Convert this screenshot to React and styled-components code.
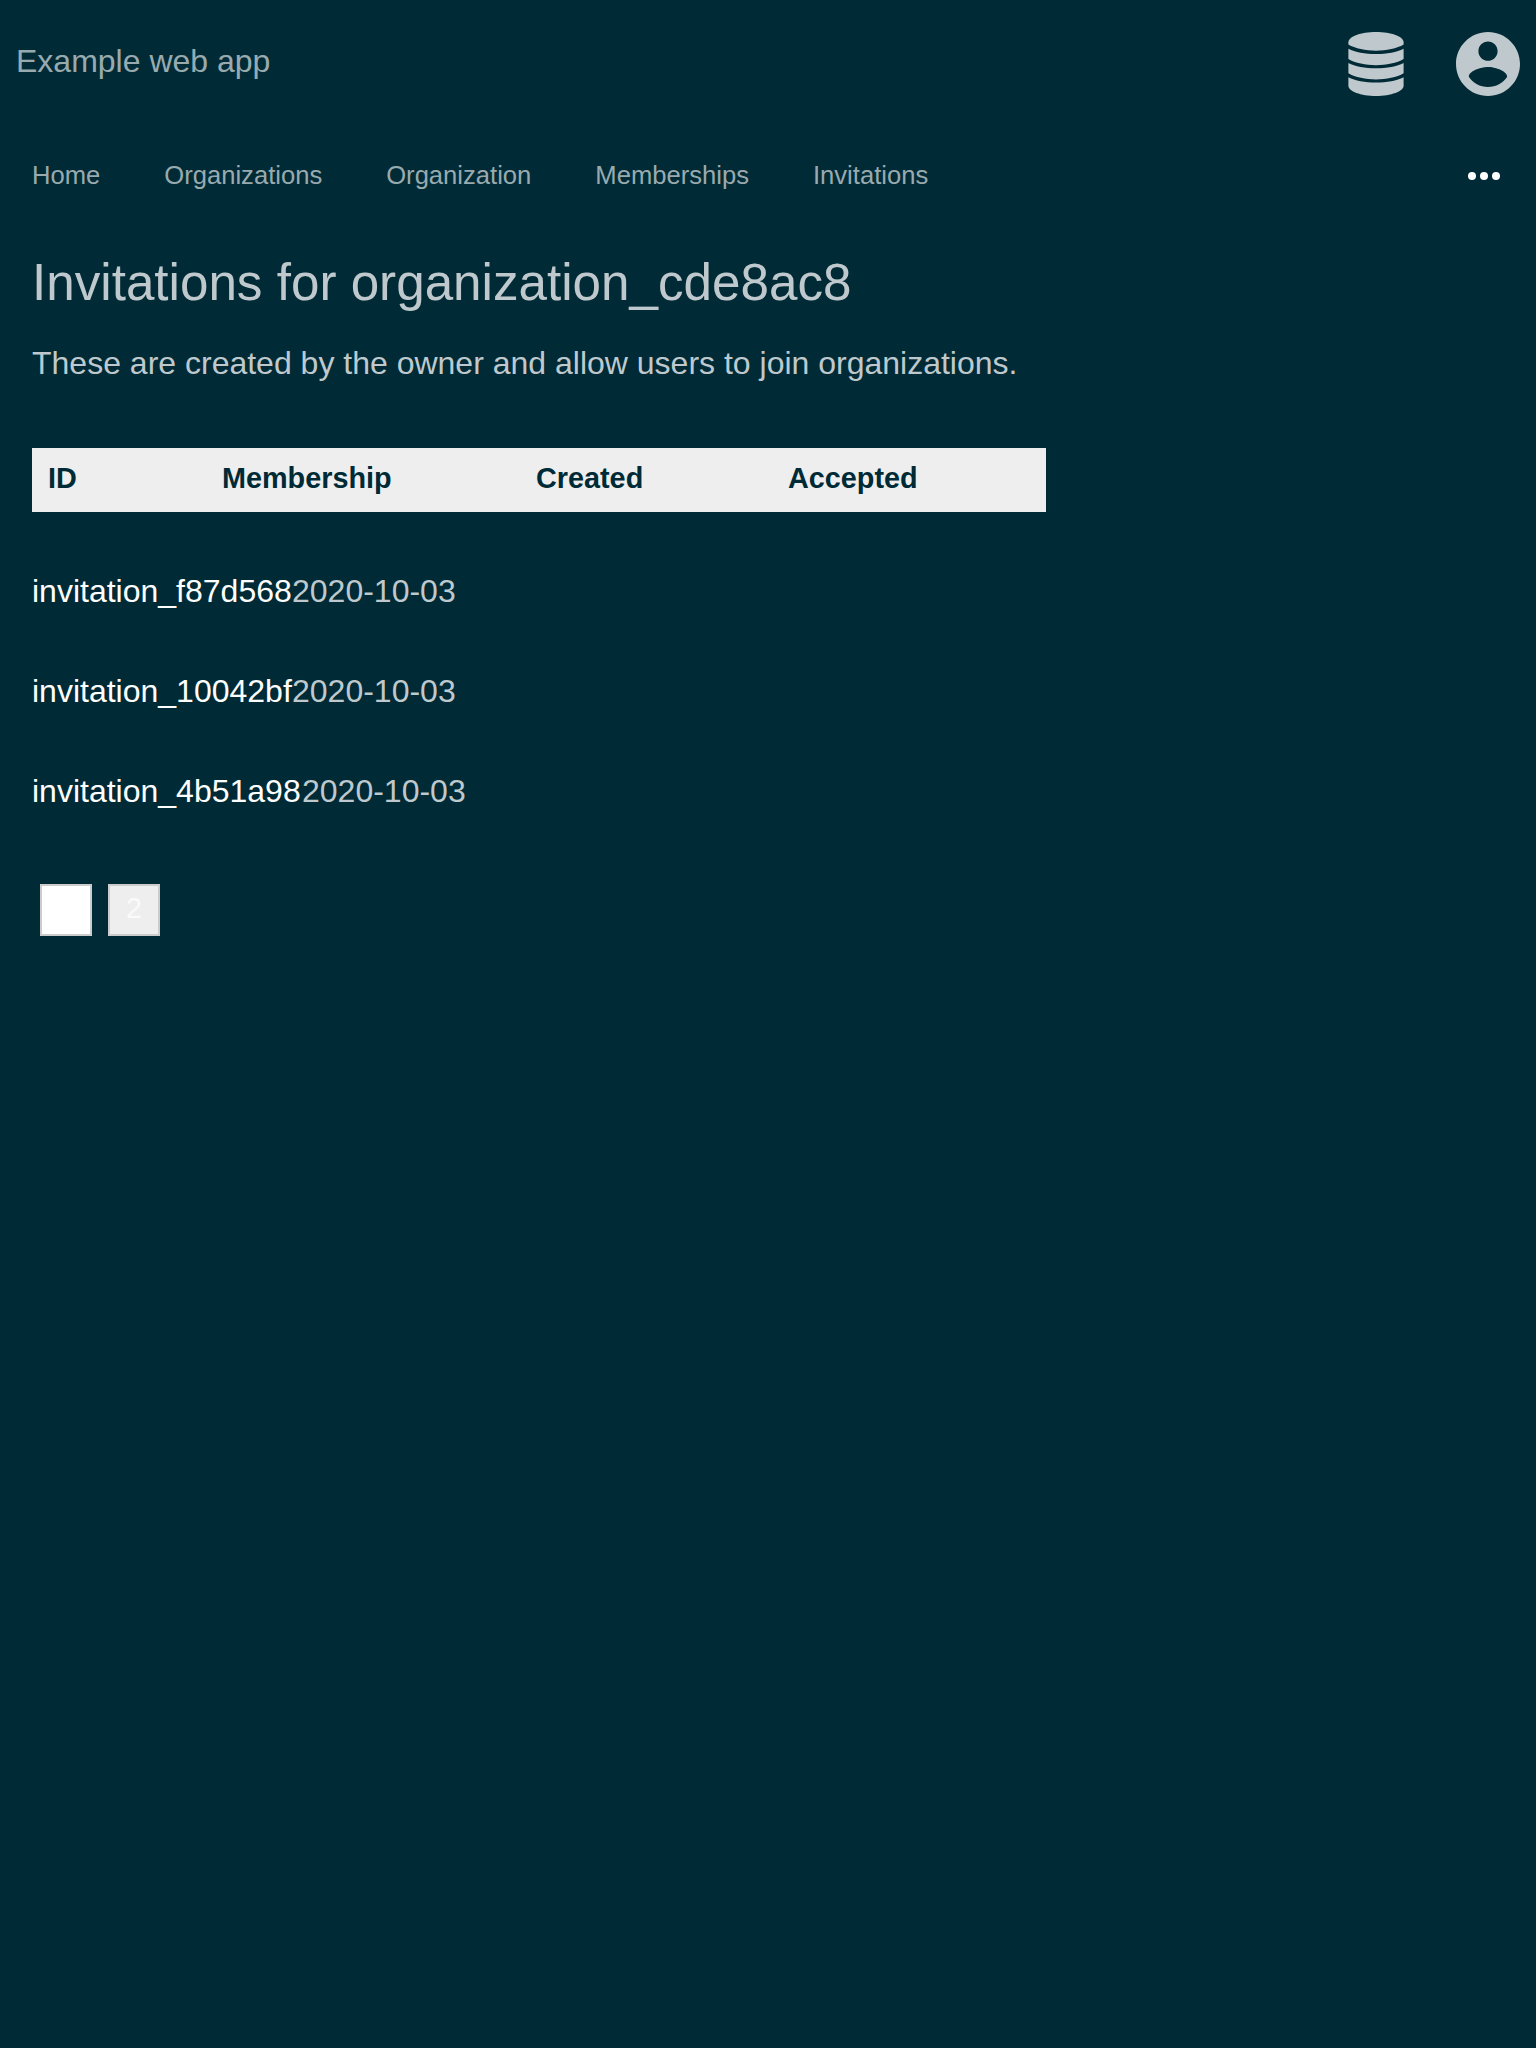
import React from "react";
import styled, { createGlobalStyle } from "styled-components";

const GlobalStyle = createGlobalStyle`
  * { box-sizing: border-box; }
  body {
    margin: 0;
    background: #002b36;
    color: #bfc9cd;
    font-family: "Liberation Sans", Arial, sans-serif;
    font-size: 32px;
    line-height: 1.5;
  }
`;

const Page = styled.div`
  min-height: 2048px;
  background: #002b36;
`;

const Header = styled.header`
  display: flex;
  justify-content: space-between;
  align-items: flex-start;
  height: 128px;
  padding: 32px 16px 0;
`;

const Brand = styled.a`
  color: #99aaaf;
  line-height: 58px;
`;

const HeaderIcons = styled.div`
  display: flex;
  gap: 48px;
`;

const HeaderIcon = styled.svg`
  display: block;
  width: 64px;
  height: 64px;
  fill: #bfc9cd;
`;

const Nav = styled.nav`
  display: flex;
  align-items: center;
  gap: 64px;
  height: 96px;
  padding: 0 32px;
`;

const NavLink = styled.a`
  padding-bottom: 2px;
  color: #99aaaf;
  font-size: 25.6px;
`;

const More = styled.svg`
  display: block;
  width: 40px;
  height: 40px;
  margin-left: auto;
  fill: #fff;
`;

const Main = styled.main`
  padding: 20px 32px;
`;

const Title = styled.h1`
  margin: 0;
  font-size: 51.2px;
  font-weight: 400;
  line-height: 77px;
`;

const Intro = styled.p`
  margin: 18px 0 0;
  line-height: 48px;
`;

const TableHead = styled.div`
  display: flex;
  width: 1014px;
  height: 64px;
  margin-top: 61px;
  padding: 0 16px;
  background: #eee;
`;

const HeadCell = styled.div`
  width: ${(p) => p.$width}px;
  color: #002b36;
  font-size: 28.8px;
  font-weight: 700;
  line-height: 61px;
`;

const List = styled.ul`
  display: grid;
  gap: 52px;
  margin: 55px 0 0;
  padding: 0;
  list-style: none;
`;

const Invitation = styled.li`
  display: flex;
  line-height: 48px;
`;

const InvitationLink = styled.a`
  width: ${(p) => p.$width}px;
  color: #fff;
`;

const Pagination = styled.div`
  display: flex;
  gap: 16px;
  margin: 69px 0 0 8px;
`;

const PageButton = styled.a`
  width: 52px;
  height: 52px;
  border: 2px solid #ccc;
  background: ${(p) => (p.$current ? "#fff" : "#eee")};
  color: ${(p) => (p.$current ? "#fff" : "#fafafa")};
  font-size: 28.8px;
  line-height: 44px;
  text-align: center;
`;

const links = ["Home", "Organizations", "Organization", "Memberships", "Invitations"];
const columns = [
  ["ID", 174],
  ["Membership", 314],
  ["Created", 252],
  ["Accepted", 200],
];
const invitations = [
  ["invitation_f87d568", 260],
  ["invitation_10042bf", 260],
  ["invitation_4b51a98", 270],
];

export default function App() {
  return (
    <Page>
      <GlobalStyle />
      <Header>
        <Brand>Example web app</Brand>
        <HeaderIcons>
          <HeaderIcon viewBox="0 0 64 64" aria-label="Administration">
            <path d="M4.400 10.200C4.400 4.600 16.800 0 32 0S59.600 4.600 59.600 10.200V12.600C53.300 16.500 42 18.800 32 18.800S10.700 16.500 4.400 12.600Z" />
            <path d="M4.400 16.700C11 20 21 22 32 22S53 20 59.600 16.700V27C53 31 42 33.200 32 33.200S11 31 4.400 27Z" />
            <path d="M4.400 30.900C11 34.200 21 36.200 32 36.200S53 34.200 59.600 30.900V41.200C53 45.200 42 47.400 32 47.400S11 45.200 4.400 41.200Z" />
            <path d="M4.400 45.200C11 48.500 21 50.500 32 50.500S53 48.500 59.600 45.200V53.800C59.600 59.400 47.200 64 32 64S4.400 59.400 4.400 53.800Z" />
          </HeaderIcon>
          <HeaderIcon viewBox="2 2 20 20" aria-label="Account">
            <path d="M12 2C6.480 2 2 6.480 2 12s4.480 10 10 10 10-4.480 10-10S17.520 2 12 2zm0 3c1.660 0 3 1.340 3 3s-1.340 3-3 3-3-1.340-3-3 1.340-3 3-3zm0 14.200c-2.500 0-4.710-1.280-6-3.220.03-1.990 4-3.080 6-3.080 1.990 0 5.970 1.090 6 3.080-1.290 1.940-3.500 3.220-6 3.220z" />
          </HeaderIcon>
        </HeaderIcons>
      </Header>
      <Nav>
        {links.map((l) => (
          <NavLink key={l}>{l}</NavLink>
        ))}
        <More viewBox="0 0 40 40" aria-label="More">
          <circle cx="8" cy="20" r="4" />
          <circle cx="20" cy="20" r="4" />
          <circle cx="32" cy="20" r="4" />
        </More>
      </Nav>
      <Main>
        <Title>Invitations for organization_cde8ac8</Title>
        <Intro>These are created by the owner and allow users to join organizations.</Intro>
        <TableHead>
          {columns.map(([name, width]) => (
            <HeadCell key={name} $width={width}>{name}</HeadCell>
          ))}
        </TableHead>
        <List>
          {invitations.map(([id, width]) => (
            <Invitation key={id}>
              <InvitationLink $width={width}>{id}</InvitationLink>
              <span>2020-10-03</span>
            </Invitation>
          ))}
        </List>
        <Pagination>
          <PageButton $current>1</PageButton>
          <PageButton>2</PageButton>
        </Pagination>
      </Main>
    </Page>
  );
}
